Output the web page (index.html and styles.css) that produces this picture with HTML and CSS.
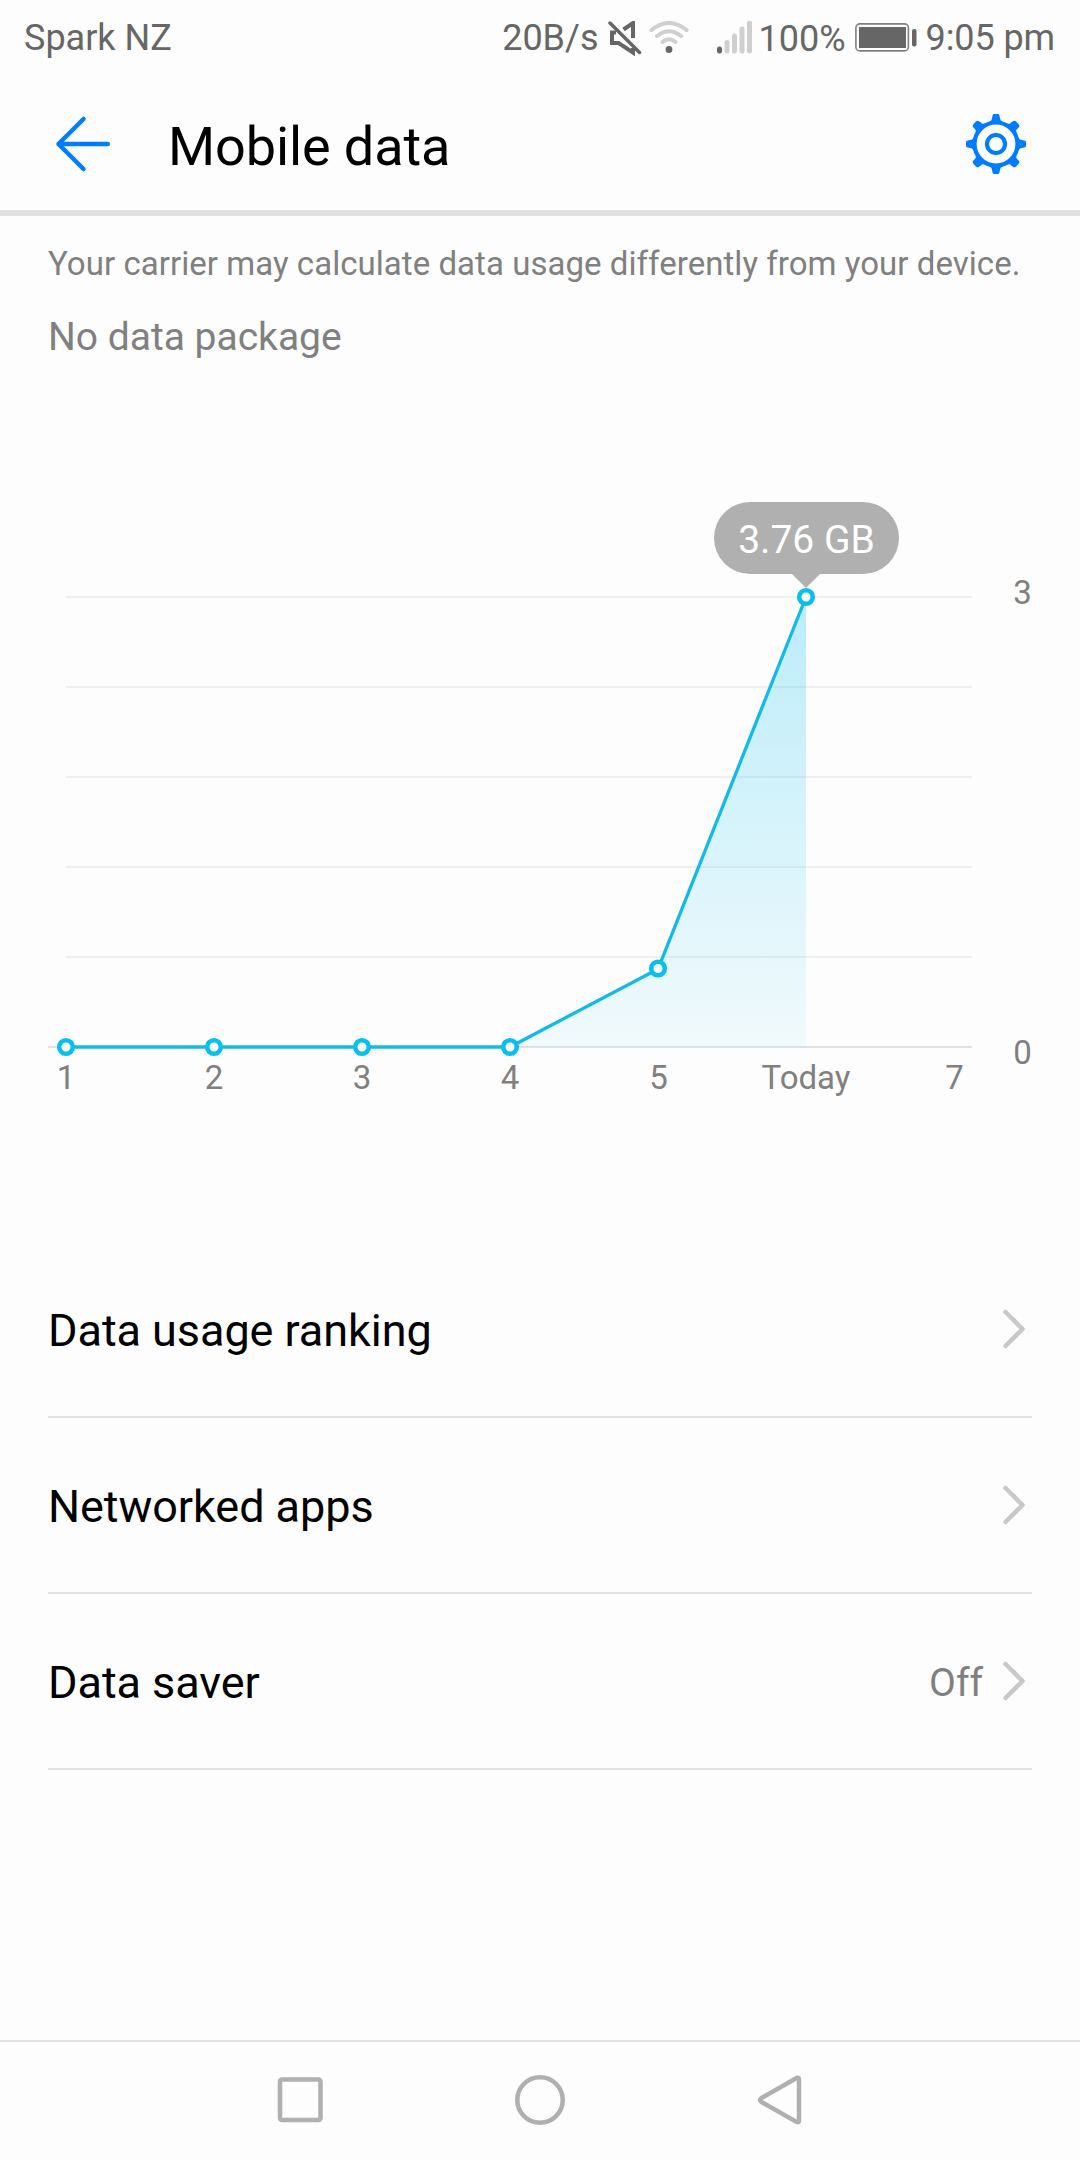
FILE: index.html
```html
<!DOCTYPE html>
<html lang="en">
  <head>
    <meta charset="UTF-8" />
    <meta name="viewport" content="width=device-width, initial-scale=1.0" />
    <title>Mobile data</title>
    <link rel="stylesheet" href="styles.css">
  </head>
  <body>
    <div class="statusBar">
      <span class="carrier">Spark NZ</span>
      <span class="speed">20B/s</span>
      <svg class="mute" width="34" height="36" viewBox="0 0 34 36">
        <path d="M15.500 8.500 L25 2 V17 M8 11.500 H4 V22 H10.500 L25 31.500 V27" />
        <path class="slash" d="M2 2 L31.500 31.500" />
      </svg>
      <svg class="wifi" width="40" height="36" viewBox="0 0 40 36">
        <path d="M2.500 9 Q20 -5 37.500 9 M8 15 Q20 5.500 32 15 M13.500 21 Q20 15.500 26.500 21" />
        <circle cx="20" cy="28.500" r="3.400" />
      </svg>
      <svg class="signal" width="36" height="36" viewBox="0 0 36 36">
        <path class="on" d="M2.500 28 V30" />
        <path d="M10 21.500 V30 M17.500 15 V30 M25 8 V30 M32.500 2 V30" />
      </svg>
      <span class="percent">100%</span>
      <svg class="battery" width="62" height="32" viewBox="0 0 62 32">
        <rect class="case" x="0.900" y="0.900" width="52.500" height="27" rx="4" />
        <rect x="4" y="4" width="47" height="21" rx="0.500" />
        <rect x="57" y="6" width="4.500" height="17.500" rx="2" />
      </svg>
      <span class="time">9:05 pm</span>
    </div>

    <header class="header">
      <svg class="back" width="60" height="60" viewBox="0 0 60 60">
        <path d="M31.500 5 L6.500 30 L31.500 55 M6.500 30 H55.800" />
      </svg>
      <h1>Mobile data</h1>
      <svg class="settings" width="60" height="60" viewBox="-30 -30 60 60">
        <defs>
          <path id="tooth" d="M-7.500 -21 L-4.500 -24 L-3.300 -29 Q-3 -30 -2 -30 H2 Q3 -30 3.300 -29 L4.500 -24 L7.500 -21 Z" />
          <path id="toothDiagonal" d="M-8 -21 L-4.500 -24 L-4.200 -28 Q-4 -30 -2 -30 H2 Q4 -30 4.200 -28 L4.500 -24 L8 -21 Z" />
        </defs>
        <use href="#tooth" />
        <use href="#tooth" transform="rotate(90)" />
        <use href="#tooth" transform="rotate(180)" />
        <use href="#tooth" transform="rotate(270)" />
        <use href="#toothDiagonal" transform="rotate(45)" />
        <use href="#toothDiagonal" transform="rotate(135)" />
        <use href="#toothDiagonal" transform="rotate(225)" />
        <use href="#toothDiagonal" transform="rotate(315)" />
        <circle class="ring" r="21.500" />
        <circle class="ring" r="9" />
      </svg>
    </header>

    <main>
      <p class="notice">Your carrier may calculate data usage differently from your device.</p>
      <p class="package">No data package</p>

      <div class="chart">
        <svg width="1080" height="882" viewBox="0 0 1080 882">
          <defs>
            <linearGradient id="usage" gradientUnits="userSpaceOnUse" x1="0" y1="237" x2="0" y2="687">
              <stop offset="0" stop-color="#0abff0" stop-opacity="0.270" />
              <stop offset="1" stop-color="#0abff0" stop-opacity="0.050" />
            </linearGradient>
          </defs>
          <path class="grid" d="M66 237 H972 M66 327 H972 M66 417 H972 M66 507 H972 M66 597 H972" />
          <path class="axis" d="M48 687 H972" />
          <path fill="url(#usage)" d="M510 687 L658 609 L806 237 V687 Z" />
          <polyline class="line" points="66,687 214,687 362,687 510,687 658,609 806,237" />
          <g class="dots">
            <circle cx="66" cy="687" r="6.800" />
            <circle cx="214" cy="687" r="6.800" />
            <circle cx="362" cy="687" r="6.800" />
            <circle cx="510" cy="687" r="6.800" />
            <circle cx="658" cy="608.500" r="6.800" />
            <circle cx="806" cy="237" r="6.800" />
          </g>
          <g class="labels">
            <text x="66" y="729">1</text>
            <text x="214" y="729">2</text>
            <text x="362" y="729">3</text>
            <text x="510" y="729">4</text>
            <text x="658.500" y="729">5</text>
            <text x="806" y="729">Today</text>
            <text x="954.500" y="729">7</text>
            <text x="1022.500" y="244">3</text>
            <text x="1022.500" y="704">0</text>
          </g>
        </svg>
        <div class="tooltip">3.76 GB</div>
      </div>

      <ul class="menu">
        <li>
          <span class="name">Data usage ranking</span>
          <svg class="arrow" width="24" height="40" viewBox="0 0 24 40"><path d="M3.500 3 L20.500 20 L3.500 37" /></svg>
        </li>
        <li>
          <span class="name">Networked apps</span>
          <svg class="arrow" width="24" height="40" viewBox="0 0 24 40"><path d="M3.500 3 L20.500 20 L3.500 37" /></svg>
        </li>
        <li>
          <span class="name">Data saver</span>
          <span class="value">Off</span>
          <svg class="arrow" width="24" height="40" viewBox="0 0 24 40"><path d="M3.500 3 L20.500 20 L3.500 37" /></svg>
        </li>
      </ul>
    </main>

    <nav class="navBar">
      <svg width="52" height="52" viewBox="0 0 52 52"><rect x="6" y="5.500" width="40.500" height="40.500" rx="2" /></svg>
      <svg width="52" height="52" viewBox="0 0 52 52"><circle cx="26" cy="26" r="22.700" /></svg>
      <svg width="52" height="52" viewBox="0 0 52 52"><path d="M43 3.800 L7.500 24 Q4.500 26 7.500 28 L43 48.200 Q45 48.800 45 46.500 V5.500 Q45 3.200 43 3.800 Z" /></svg>
    </nav>
  </body>
</html>
```

FILE: styles.css
```css
* {
  box-sizing: border-box;
}
body {
  display: flex;
  flex-direction: column;
  width: 1080px;
  height: 2160px;
  margin: 0;
  background: #fdfdfd;
  font-family: Roboto, sans-serif;
  color: #000;
}
svg {
  display: block;
  flex: none;
}

/* status bar */
.statusBar {
  display: flex;
  align-items: center;
  height: 75px;
  padding: 2px 25px 0 24px;
  font-size: 36px;
  line-height: 73px;
  color: #666;
  white-space: nowrap;
}
.carrier {
  flex: 1;
}
.mute {
  margin-left: 10px;
  fill: none;
  stroke: #666;
  stroke-width: 4;
}
.mute .slash {
  stroke-linecap: round;
  stroke-width: 3.5;
}
.wifi {
  margin-left: 7px;
  fill: #666;
}
.wifi path {
  fill: none;
  stroke: #cfcfcf;
  stroke-width: 4;
  stroke-linecap: round;
}
.signal {
  margin-left: 28px;
  stroke: #cfcfcf;
  stroke-width: 5;
  stroke-linecap: round;
}
.signal .on {
  stroke: #666;
}
.percent {
  margin-left: 5px;
  padding-top: 1px;
}
.battery {
  margin-left: 9px;
  fill: #666;
}
.battery .case {
  fill: none;
  stroke: #808080;
  stroke-width: 1.6;
}
.time {
  margin-left: 9px;
  letter-spacing: -0.1px;
}

/* header */
.header {
  display: flex;
  align-items: center;
  height: 141px;
  padding: 3px 54px 0 52px;
  border-bottom: 6px solid #e1e1e1;
}
.back {
  fill: none;
  stroke: #007dff;
  stroke-width: 4.5;
  stroke-linecap: round;
  stroke-linejoin: round;
}
h1 {
  flex: 1;
  margin: 0;
  padding: 5px 0 0 56px;
  font-size: 54px;
  font-weight: 400;
  letter-spacing: -0.1px;
}
.settings {
  fill: #007dff;
}
.settings .ring {
  fill: none;
  stroke: #007dff;
  stroke-width: 4.2;
}

/* usage */
main {
  flex: 1;
}
.notice,
.package {
  margin: 0;
  padding-left: 48px;
  color: #808080;
  white-space: nowrap;
}
.notice {
  padding-top: 28px;
  font-size: 33px;
  line-height: 40px;
  letter-spacing: 0.045px;
}
.package {
  margin-top: 30px;
  font-size: 39px;
  line-height: 46px;
}
.chart {
  position: relative;
  height: 882px;
}
.grid,
.axis {
  fill: none;
  stroke: #efefef;
  stroke-width: 2;
}
.axis {
  stroke: #e1e1e1;
}
.line {
  fill: none;
  stroke: #14bae7;
  stroke-width: 3.3;
}
.dots {
  fill: #fff;
  stroke: #0abff0;
  stroke-width: 4.6;
}
.labels {
  font-size: 33px;
  fill: #808080;
  text-anchor: middle;
}
.tooltip {
  position: absolute;
  top: 142px;
  left: 714px;
  width: 185px;
  height: 72px;
  border-radius: 36px;
  background: #b0b0b0;
  font-size: 39px;
  line-height: 76px;
  color: #fff;
  text-align: center;
}
.tooltip::after {
  content: "";
  position: absolute;
  top: 72px;
  left: 78px;
  border: 14px solid transparent;
  border-top-color: #b0b0b0;
  border-bottom: 0;
}

/* menu */
.menu {
  margin: 0;
  padding: 0 48px;
  list-style: none;
}
.menu li {
  display: flex;
  align-items: center;
  height: 176px;
  padding-right: 6px;
  border-bottom: 2px solid #e1e1e1;
}
.name {
  flex: 1;
  padding-top: 3px;
  font-size: 45px;
  letter-spacing: -0.06px;
}
.value {
  padding: 3px 19px 0 0;
  font-size: 39px;
  color: #808080;
}
.arrow {
  fill: none;
  stroke: #c9c9c9;
  stroke-width: 4.5;
  stroke-linecap: round;
  stroke-linejoin: round;
}

/* navigation bar */
.navBar {
  display: flex;
  justify-content: center;
  gap: 188px;
  height: 120px;
  padding-top: 32px;
  border-top: 2px solid #e1e1e1;
  fill: none;
  stroke: #b0b0b0;
  stroke-width: 4.5;
}
```
